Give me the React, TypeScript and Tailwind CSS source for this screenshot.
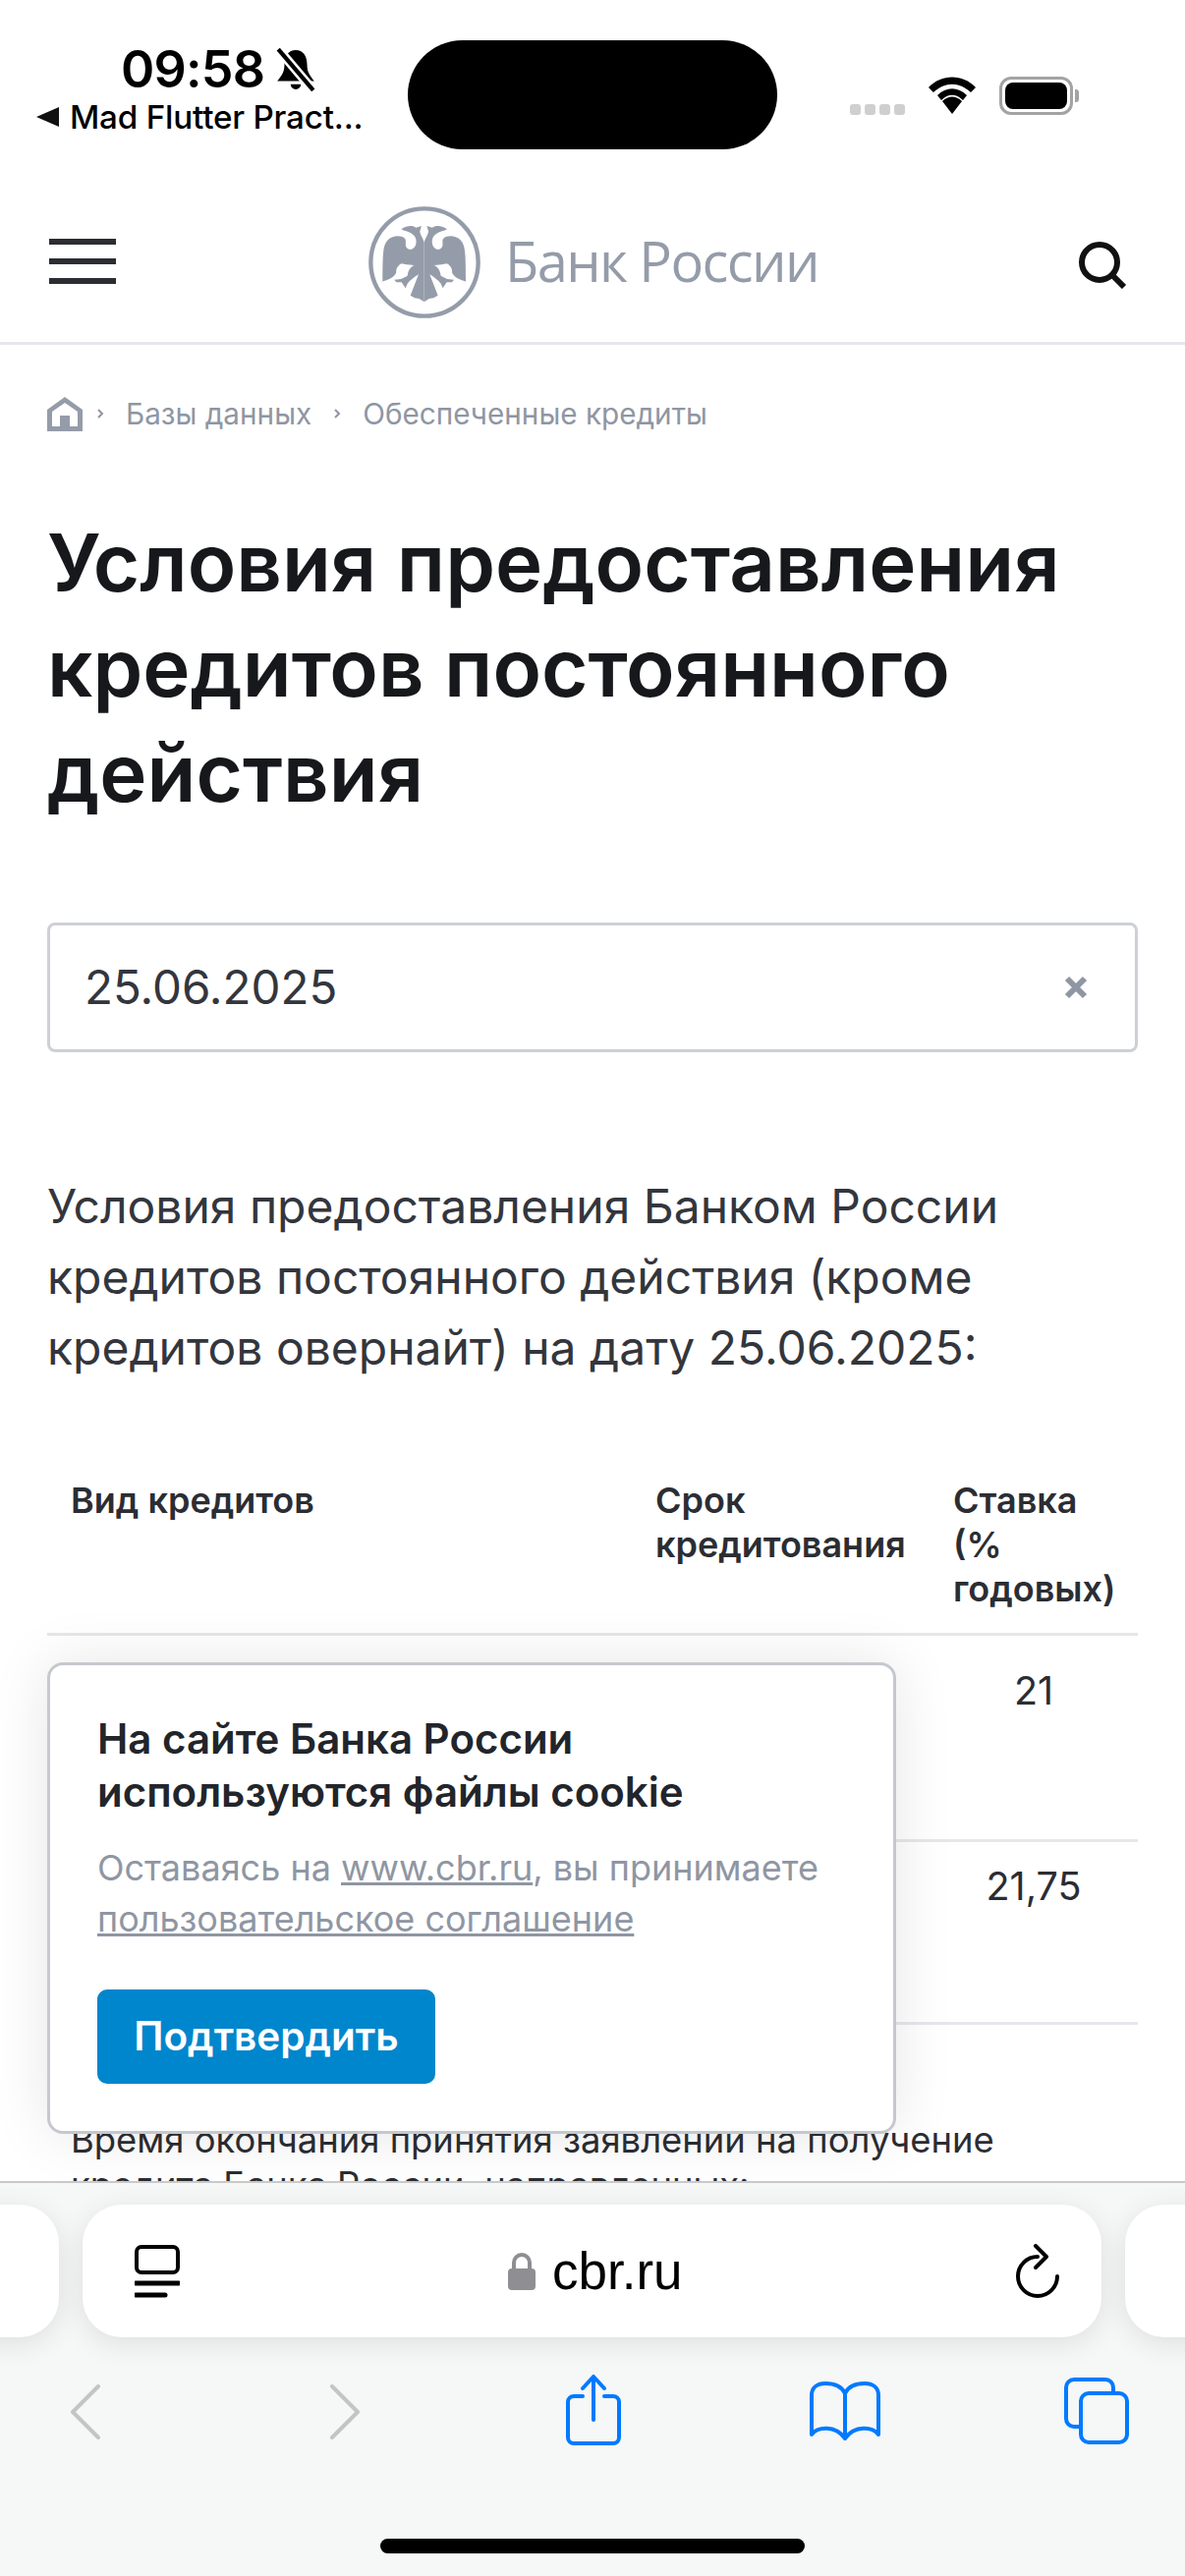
import React from "react";

const EAGLE =
  "M275 200 C270 185 262 175 262 166 L267 150 L250 155 C240 148 222 148 205 160 C215 166 225 166 238 174 C250 182 252 192 250 205 C247 222 228 228 220 214 C216 204 222 195 216 188 C205 178 180 178 165 192 C150 208 148 225 148 318 L145 320 C165 316 185 306 190 292 C188 280 198 268 206 265 L222 268 L245 270 C230 276 226 290 224 302 L205 312 L184 314 L190 322 L206 322 L218 340 L224 326 C232 316 245 306 258 298 L233 362 L246 370 L260 372 L275 382 Z";

function Eagle() {
  return (
    <svg width="114" height="114" viewBox="105 90 342 342" className="shrink-0">
      <circle cx="276" cy="261" r="164" fill="none" stroke="#959ca9" strokeWidth="13" />
      <path d={EAGLE} fill="#959ca9" />
      <path d={EAGLE} fill="#959ca9" transform="translate(550 0) scale(-1 1)" />
    </svg>
  );
}

function StatusBar() {
  return (
    <div className="flex h-[180px] font-['Inter',sans-serif] text-black">
      <div className="w-[415px] shrink-0 pl-[37px] pt-[46px]">
        <div className="flex items-center pl-[86px] h-[50px]">
          <span className="text-[52px] leading-[50px] font-semibold tracking-[-0.8px]">09:58</span>
          <svg width="42" height="44" viewBox="0 0 40 42" className="ml-[11px]">
            <path d="M20 2 C12 2 9 9 9 16 C9 24 6 27 2 32 L38 32 C34 27 31 24 31 16 C31 9 28 2 20 2 Z" fill="#000" />
            <path d="M15 35 A5 5 0 0 0 25 35 Z" fill="#000" />
            <path d="M3 1 L37 41" stroke="#fff" strokeWidth="9" />
            <path d="M3 1 L37 41" stroke="#000" strokeWidth="4" />
          </svg>
        </div>
        <div className="flex items-center h-[30px] mt-[8px]">
          <svg width="23" height="20" viewBox="0 0 23 20" className="shrink-0">
            <path d="M0 10 L23 0 V20 Z" fill="#111" />
          </svg>
          <span className="ml-[11px] text-[33.2px] leading-[30px] font-medium tracking-[-0.2px] whitespace-nowrap">Mad Flutter Pract...</span>
        </div>
      </div>
      <div className="w-[376px] h-[111px] mt-[41px] rounded-[56px] bg-black shrink-0" />
      <div className="flex items-start pl-[74px] pt-[78px]">
        <div className="flex gap-[4px] mt-[28px]">
          <div className="w-[11px] h-[11px] rounded-[3px] bg-[#cfcfcf]" />
          <div className="w-[11px] h-[11px] rounded-[3px] bg-[#cfcfcf]" />
          <div className="w-[11px] h-[11px] rounded-[3px] bg-[#cfcfcf]" />
          <div className="w-[11px] h-[11px] rounded-[3px] bg-[#cfcfcf]" />
        </div>
        <svg width="50" height="38" viewBox="0 0 50 38" className="ml-[23px]">
          <path d="M25 38 L15 25 C21 19 29 19 35 25 Z" fill="#000" />
          <path d="M10 19 C19 10 31 10 40 19 L36 24 C29 17 21 17 14 24 Z" fill="#000" />
          <path d="M1 11 C14 -3 36 -3 49 11 L44 16 C32 5 18 5 6 16 Z" fill="#000" />
        </svg>
        <div className="ml-[23px] flex items-center">
          <div className="w-[75px] h-[39px] rounded-[12px] border-[3px] border-[#a3a3a3] p-[3px]">
            <div className="w-full h-full rounded-[8px] bg-black" />
          </div>
          <div className="w-[4px] h-[13px] ml-[2px] rounded-r-[3px] bg-[#a3a3a3]" />
        </div>
      </div>
    </div>
  );
}

function Header() {
  return (
    <div className="h-[171px] border-b-[3px] border-[#e6e7ea] flex items-start font-['Inter',sans-serif]">
      <div className="ml-[50px] mt-[63px] w-[68px] flex flex-col gap-[14px] shrink-0">
        <div className="h-[6px] bg-[#2b2d33]" />
        <div className="h-[6px] bg-[#2b2d33]" />
        <div className="h-[6px] bg-[#2b2d33]" />
      </div>
      <div className="ml-[257px] mt-[30px] flex items-center shrink-0">
        <Eagle />
        <span className="ml-[25px] mt-[-5px] font-['Open_Sans',sans-serif] font-normal text-[56px] leading-[60px] text-[#959ca9] tracking-[-1.6px] whitespace-nowrap">Банк России</span>
      </div>
      <svg width="50" height="48" viewBox="0 0 50 48" className="ml-auto mr-[59px] mt-[66px]" fill="none" stroke="#111" strokeWidth="6">
        <circle cx="22" cy="21" r="18" />
        <path d="M34 33 L47 46" />
      </svg>
    </div>
  );
}

function Breadcrumb() {
  return (
    <div className="flex items-center pl-[48px] mt-[53px] h-[34px] text-[29.7px] text-[#8f96a3] font-['Inter',sans-serif]">
      <svg width="36" height="35" viewBox="0 0 36 35" className="shrink-0">
        <path fillRule="evenodd" d="M18 0 L36 13 V35 H0 V13 Z M5 15 V30 H13 V19 H23 V30 H31 V15 L18 6 Z" fill="#959ca9" />
      </svg>
      <svg width="8" height="10" viewBox="0 0 8 10" className="ml-[14px]" fill="none" stroke="#8f96a3" strokeWidth="2">
        <path d="M2 1 L6 5 L2 9" />
      </svg>
      <span className="ml-[22px] whitespace-nowrap">Базы данных</span>
      <svg width="8" height="10" viewBox="0 0 8 10" className="ml-[22px]" fill="none" stroke="#8f96a3" strokeWidth="2">
        <path d="M2 1 L6 5 L2 9" />
      </svg>
      <span className="ml-[22px] whitespace-nowrap">Обеспеченные кредиты</span>
    </div>
  );
}

function RateTable() {
  return (
    <div className="mx-[48px] mt-[97px] font-['Inter',sans-serif] text-[#2b2d33]">
      <div className="grid grid-cols-[595px_303px_212px] h-[160px] border-b-[3px] border-[#e6e7ea] text-[36px] leading-[45px] font-semibold">
        <div className="pl-[24px]">Вид кредитов</div>
        <div className="pl-[24px]">Срок<br />кредитования</div>
        <div className="pl-[24px]">Ставка<br />(%<br />годовых)</div>
      </div>
      <div className="grid grid-cols-[595px_303px_212px] h-[210px] border-b-[3px] border-[#e6e7ea] text-[39.5px] leading-[46px]">
        <div />
        <div />
        <div className="text-center pt-[33px]">21</div>
      </div>
      <div className="grid grid-cols-[595px_303px_212px] h-[186px] border-b-[3px] border-[#e6e7ea] text-[39.5px] leading-[46px]">
        <div />
        <div />
        <div className="text-center pt-[22px]">21,75</div>
      </div>
      <div className="pl-[24px] pt-[94px] w-[1060px] text-[36.4px] leading-[46px]">
        Время окончания принятия заявлений на получение кредита Банка России, направленных:
      </div>
    </div>
  );
}

function Cookie() {
  return (
    <div className="absolute left-[48px] top-[1692px] w-[864px] h-[480px] rounded-[16px] border-[3px] border-[#c5c8ce] bg-white pl-[48px] pt-[48px] font-['Inter',sans-serif] shadow-[0_0_60px_rgba(0,0,0,0.10)]">
      <div className="text-[42px] leading-[54px] font-semibold text-[#22252b]">
        На сайте Банка России<br />используются файлы cookie
      </div>
      <div className="mt-[24px] text-[36px] leading-[52px] text-[#8f96a3] whitespace-nowrap">
        Оставаясь на <span className="underline">www.cbr.ru</span>, вы принимаете<br />
        <span className="underline">пользовательское соглашение</span>
      </div>
      <button className="mt-[46px] block w-[344px] h-[96px] rounded-[10px] bg-[#0086cc] text-white text-[40.5px] font-semibold">Подтвердить</button>
    </div>
  );
}

function SafariBar() {
  return (
    <div className="absolute left-0 right-0 top-[2220px] h-[402px] border-t-[2px] border-[#c9c9c9] bg-[#f6f7f7] overflow-hidden font-['Inter',sans-serif]">
      <div className="flex gap-[24px] mt-[22px] ml-[-1000px] w-[3206px]">
        <div className="w-[1060px] h-[135px] rounded-[40px] bg-white shadow-[0_6px_30px_rgba(0,0,0,0.10)] shrink-0" />
        <div className="w-[1037px] h-[135px] rounded-[40px] bg-white shadow-[0_6px_30px_rgba(0,0,0,0.10)] shrink-0 flex items-center pl-[53px] pr-[42px]">
          <svg width="46" height="54" viewBox="0 0 46 54" fill="none" stroke="#000" className="shrink-0">
            <rect x="2" y="2" width="42" height="26" rx="5" strokeWidth="4" />
            <path d="M1 39 H45" strokeWidth="5" strokeLinecap="round" />
            <path d="M1 51 H31" strokeWidth="5" strokeLinecap="round" />
          </svg>
          <div className="flex items-center ml-[334px]">
            <svg width="28" height="38" viewBox="0 0 28 38" className="shrink-0">
              <path d="M6 18 V10 A8 8 0 0 1 22 10 V18" fill="none" stroke="#8e8e93" strokeWidth="4" />
              <rect x="0" y="16" width="28" height="22" rx="4" fill="#8e8e93" />
            </svg>
            <span className="ml-[17px] text-[53px] leading-[60px] text-black font-['Liberation_Sans',sans-serif]">cbr.ru</span>
          </div>
          <svg width="46" height="56" viewBox="0 0 46 56" fill="none" stroke="#000" strokeWidth="4" strokeLinecap="round" strokeLinejoin="round" className="ml-auto">
            <path d="M23 13 A20 20 0 1 0 43 33" />
            <path d="M21 2 L32 13 L21 24" />
          </svg>
        </div>
        <div className="w-[1060px] h-[135px] rounded-[40px] bg-white shadow-[0_6px_30px_rgba(0,0,0,0.10)] shrink-0" />
      </div>
      <div className="flex items-start mt-[38px] pl-[71px]">
        <svg width="32" height="56" viewBox="0 0 32 56" fill="none" stroke="#c4c4c4" strokeWidth="4" strokeLinecap="round" strokeLinejoin="round" className="mt-[10px] shrink-0">
          <path d="M29 2 L3 28 L29 54" />
        </svg>
        <svg width="32" height="56" viewBox="0 0 32 56" fill="none" stroke="#c4c4c4" strokeWidth="4" strokeLinecap="round" strokeLinejoin="round" className="ml-[232px] mt-[10px] shrink-0">
          <path d="M3 2 L29 28 L3 54" />
        </svg>
        <svg width="56" height="72" viewBox="0 0 56 72" fill="none" stroke="#007aff" strokeWidth="4" strokeLinecap="round" strokeLinejoin="round" className="ml-[209px] shrink-0">
          <path d="M17 22 H8 A6 6 0 0 0 2 28 V64 A6 6 0 0 0 8 70 H48 A6 6 0 0 0 54 64 V28 A6 6 0 0 0 48 22 H39" />
          <path d="M28 46 V3" />
          <path d="M17 14 L28 2 L39 14" />
        </svg>
        <svg width="72" height="60" viewBox="0 0 72 60" fill="none" stroke="#007aff" strokeWidth="4" strokeLinecap="round" strokeLinejoin="round" className="ml-[192px] mt-[7px] shrink-0">
          <path d="M36 12 C32 4 24 2 16 2 C8 2 2 6 2 14 V54 C8 46 26 44 36 58 C46 44 64 46 70 54 V14 C70 6 64 2 56 2 C48 2 40 4 36 12 Z" />
          <path d="M36 12 V56" />
        </svg>
        <svg width="66" height="68" viewBox="0 0 66 68" fill="none" stroke="#007aff" strokeWidth="4" strokeLinejoin="round" className="ml-[187px] mt-[3px] shrink-0">
          <path d="M17 50 H10 A8 8 0 0 1 2 42 V10 A8 8 0 0 1 10 2 H42 A8 8 0 0 1 50 10 V16" />
          <rect x="17" y="16" width="47" height="50" rx="8" />
        </svg>
      </div>
      <div className="w-[432px] h-[15px] rounded-full bg-black mt-[95px] ml-[387px]" />
    </div>
  );
}

export default function App() {
  return (
    <div className="relative w-[1206px] h-[2622px] overflow-hidden bg-white">
      <StatusBar />
      <Header />
      <Breadcrumb />
      <h1 className="mt-[81px] pl-[48px] text-[81.5px] leading-[107px] font-semibold text-[#17181c] font-['Inter',sans-serif]">
        Условия предоставления<br />кредитов постоянного<br />действия
      </h1>
      <div className="mx-[48px] mt-[99px] h-[132px] rounded-[8px] border-[3px] border-[#cdd0d5] flex items-center pl-[35px] pr-[48px] font-['Inter',sans-serif] text-[47.5px] text-[#33363d]">
        <span>25.06.2025</span>
        <svg width="24" height="24" viewBox="0 0 24 24" className="ml-auto" fill="none" stroke="#8f96a3" strokeWidth="6">
          <path d="M3 3 L21 21 M21 3 L3 21" />
        </svg>
      </div>
      <p className="mt-[121px] pl-[48px] pr-[48px] text-[48px] leading-[72px] text-[#33363d] font-['Inter',sans-serif]">
        Условия предоставления Банком России<br />кредитов постоянного действия (кроме<br />кредитов овернайт) на дату 25.06.2025:
      </p>
      <RateTable />
      <Cookie />
      <SafariBar />
    </div>
  );
}
